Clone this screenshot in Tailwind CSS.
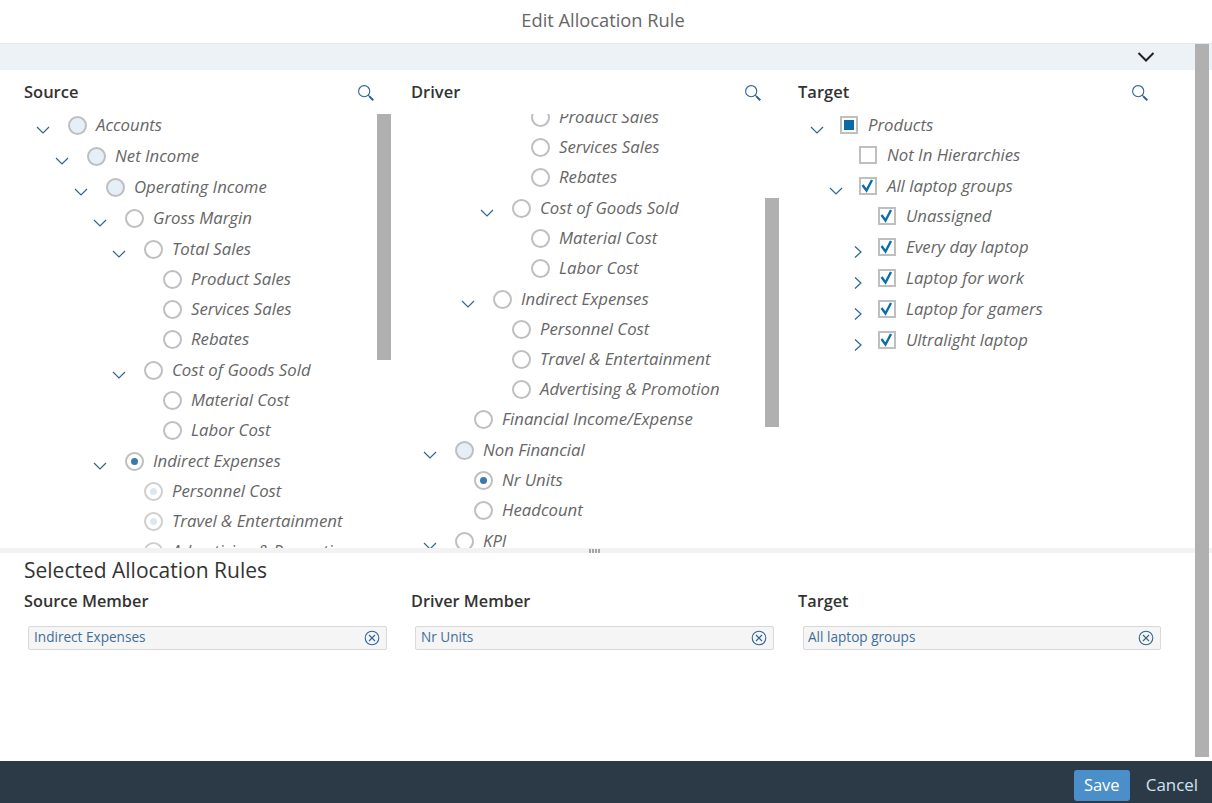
<!DOCTYPE html>
<html lang="en">
<head>
    <meta charset="UTF-8">
    <title>Edit Allocation Rule</title>
    <script src="https://cdn.jsdelivr.net/npm/@tailwindcss/browser@4"></script>
</head>
<body class="bg-white overflow-hidden font-['Open_Sans',sans-serif] text-[#333]">
    <div class="relative h-[803px] w-[1212px] flex flex-col">
        <!-- Title -->
        <header class="h-[44px] shrink-0 border-b border-[#e5e9ec] flex items-center justify-center pr-[6px] pb-[3px] text-[18.3px] text-[#666]">Edit Allocation Rule</header>

        <!-- Collapse band -->
        <div class="h-[26px] shrink-0 bg-[#edf2f7] flex justify-end pr-[56px] pt-[6px]">
            <svg class="w-[20px] h-[14px]" viewBox="0 0 20 14" fill="none" stroke="#222" stroke-width="2"><path d="M2.5 3 10 10.5 17.5 3"/></svg>
        </div>

        <!-- Trees -->
        <div class="h-[478px] shrink-0 grid grid-cols-[387px_387px_387px] pl-[24px]">
            <section class="min-w-0">
                <div class="h-[44px] flex items-center justify-between pr-[36px]">
                    <h2 class="text-[16.5px] font-semibold">Source</h2>
                    <svg class="w-[18px] h-[18px] mt-[2px]" viewBox="0 0 20 20" fill="none" stroke="#2f6497"><circle cx="8" cy="8" r="6.2" stroke-width="1.2"/><path d="M12.5 12.5 18 18" stroke-width="1.2"/><path d="M14 14 18 18" stroke-width="2.2"/></svg>
                </div>
                <div class="relative h-[434px] overflow-hidden">
                    <div id="sourceTree" class="-mt-[4px]"></div>
                    <div class="absolute left-[353px] top-0 w-[14px] h-[246px] bg-[#b0b0b0]"></div>
                </div>
            </section>
            <section class="min-w-0">
                <div class="h-[44px] flex items-center justify-between pr-[36px]">
                    <h2 class="text-[16.5px] font-semibold">Driver</h2>
                    <svg class="w-[18px] h-[18px] mt-[2px]" viewBox="0 0 20 20" fill="none" stroke="#2f6497"><circle cx="8" cy="8" r="6.2" stroke-width="1.2"/><path d="M12.5 12.5 18 18" stroke-width="1.2"/><path d="M14 14 18 18" stroke-width="2.2"/></svg>
                </div>
                <div class="relative h-[434px] overflow-hidden">
                    <div id="driverTree" class="-mt-[12px]"></div>
                    <div class="absolute left-[354px] top-[84px] w-[14px] h-[229px] bg-[#b0b0b0]"></div>
                </div>
            </section>
            <section class="min-w-0">
                <div class="h-[44px] flex items-center justify-between pr-[36px]">
                    <h2 class="text-[16.5px] font-semibold">Target</h2>
                    <svg class="w-[18px] h-[18px] mt-[2px]" viewBox="0 0 20 20" fill="none" stroke="#2f6497"><circle cx="8" cy="8" r="6.2" stroke-width="1.2"/><path d="M12.5 12.5 18 18" stroke-width="1.2"/><path d="M14 14 18 18" stroke-width="2.2"/></svg>
                </div>
                <div id="targetTree" class="-mt-[4px]"></div>
            </section>
        </div>

        <!-- Splitter -->
        <div class="h-[5px] shrink-0 bg-[#f2f2f2] flex justify-center">
            <div class="ml-[-24px] mt-[1px] w-[11px] h-[4px] bg-[repeating-linear-gradient(90deg,#a6a6a6_0,#a6a6a6_2px,#f2f2f2_2px,#f2f2f2_3px)]"></div>
        </div>

        <!-- Selected rules -->
        <div class="flex-1 pl-[24px]">
            <h3 class="text-[21px] leading-[27px] mt-[4px]">Selected Allocation Rules</h3>
            <div class="grid grid-cols-[387px_387px_387px] mt-[6px]">
                <div>
                    <div class="text-[16.3px] font-semibold leading-[22px]">Source Member</div>
                    <div class="mt-[14px] ml-[4px] w-[359px] h-[24px] flex items-center justify-between pl-[5px] pr-[6px] pb-[1px] bg-[#f5f5f5] border border-[#d9d9d9] rounded-[2px] text-[13.6px] text-[#3f6f98]">
                        <span>Indirect Expenses</span>
                        <svg class="w-[16px] h-[16px]" viewBox="0 0 16 16" fill="none" stroke="#2f6497" stroke-width="1.1"><circle cx="8" cy="8" r="6.8"/><path d="M5 5 11 11M11 5 5 11"/></svg>
                    </div>
                </div>
                <div>
                    <div class="text-[16.3px] font-semibold leading-[22px]">Driver Member</div>
                    <div class="mt-[14px] ml-[4px] w-[359px] h-[24px] flex items-center justify-between pl-[5px] pr-[6px] pb-[1px] bg-[#f5f5f5] border border-[#d9d9d9] rounded-[2px] text-[13.6px] text-[#3f6f98]">
                        <span>Nr Units</span>
                        <svg class="w-[16px] h-[16px]" viewBox="0 0 16 16" fill="none" stroke="#2f6497" stroke-width="1.1"><circle cx="8" cy="8" r="6.8"/><path d="M5 5 11 11M11 5 5 11"/></svg>
                    </div>
                </div>
                <div>
                    <div class="text-[16.3px] font-semibold leading-[22px]">Target</div>
                    <div class="mt-[14px] ml-[5px] w-[358px] h-[24px] flex items-center justify-between pl-[4px] pr-[6px] pb-[1px] bg-[#f5f5f5] border border-[#d9d9d9] rounded-[2px] text-[13.6px] text-[#3f6f98]">
                        <span>All laptop groups</span>
                        <svg class="w-[16px] h-[16px]" viewBox="0 0 16 16" fill="none" stroke="#2f6497" stroke-width="1.1"><circle cx="8" cy="8" r="6.8"/><path d="M5 5 11 11M11 5 5 11"/></svg>
                    </div>
                </div>
            </div>
        </div>

        <!-- Footer -->
        <footer class="h-[42px] shrink-0 bg-[#2c3a47] flex items-center justify-end pr-[14px] pt-[6px]">
            <button class="w-[56px] h-[31px] rounded-[3px] bg-[#4a8fca] text-white text-[16.5px]">Save</button>
            <button class="ml-[16px] text-[16.9px] text-[#d1e3f2]">Cancel</button>
        </footer>

        <!-- Dialog scrollbar -->
        <div class="absolute left-[1195px] top-[44px] w-[14px] h-[713px] bg-[#b0b0b0]"></div>
    </div>

    <script>
        // [label, level, chevron ("down" / "right" / ""), state, gap to next row]
        const sourceRows = [
            ['Accounts', 0, 'down', 'part', 31], ['Net Income', 1, 'down', 'part', 31],
            ['Operating Income', 2, 'down', 'part', 31], ['Gross Margin', 3, 'down', '', 31],
            ['Total Sales', 4, 'down', '', 30], ['Product Sales', 5, '', '', 30],
            ['Services Sales', 5, '', '', 30], ['Rebates', 5, '', '', 31],
            ['Cost of Goods Sold', 4, 'down', '', 30], ['Material Cost', 5, '', '', 30],
            ['Labor Cost', 5, '', '', 31], ['Indirect Expenses', 3, 'down', 'on', 30],
            ['Personnel Cost', 4, '', 'dim', 30], ['Travel & Entertainment', 4, '', 'dim', 30],
            ['Advertising & Promotion', 4, '', 'dim', 30]
        ];
        const driverRows = [
            ['Product Sales', 4, '', '', 30], ['Services Sales', 4, '', '', 30],
            ['Rebates', 4, '', '', 31], ['Cost of Goods Sold', 3, 'down', '', 30],
            ['Material Cost', 4, '', '', 30], ['Labor Cost', 4, '', '', 31],
            ['Indirect Expenses', 2, 'down', '', 30], ['Personnel Cost', 3, '', '', 30],
            ['Travel & Entertainment', 3, '', '', 30], ['Advertising & Promotion', 3, '', '', 30],
            ['Financial Income/Expense', 1, '', '', 31], ['Non Financial', 0, 'down', 'part', 30],
            ['Nr Units', 1, '', 'on', 30], ['Headcount', 1, '', '', 31], ['KPI', 0, 'down', '', 30]
        ];
        const targetRows = [
            ['Products', 0, 'down', 'mixed', 30], ['Not In Hierarchies', 1, '', '', 31],
            ['All laptop groups', 1, 'down', 'on', 30], ['Unassigned', 2, '', 'on', 31],
            ['Every day laptop', 2, 'right', 'on', 31], ['Laptop for work', 2, 'right', 'on', 31],
            ['Laptop for gamers', 2, 'right', 'on', 31], ['Ultralight laptop', 2, 'right', 'on', 31]
        ];

        const chevrons = {
            down: '<svg class="w-[18px] h-[18px] mt-[9px] shrink-0" viewBox="0 0 18 18" fill="none" stroke="#2f6497" stroke-width="1.2"><path d="M3 6 9 12 15 6"/></svg>',
            right: '<svg class="w-[18px] h-[18px] mt-[9px] shrink-0" viewBox="0 0 18 18" fill="none" stroke="#2f6497" stroke-width="1.2"><path d="M9 3.5 15 9 9 14.5"/></svg>',
            '': '<span class="w-[18px] h-[18px] shrink-0"></span>'
        };

        const radios = {
            '': '<span class="w-[19px] h-[19px] rounded-full border-2 border-[#bfbfbf] bg-white"></span>',
            part: '<span class="w-[19px] h-[19px] rounded-full border-2 border-[#bfbfbf] bg-[#e6eef7]"></span>',
            on: '<span class="w-[19px] h-[19px] rounded-full border-2 border-[#bfbfbf] bg-white flex items-center justify-center"><span class="w-[7px] h-[7px] rounded-full bg-[#3a78b0]"></span></span>',
            dim: '<span class="w-[19px] h-[19px] rounded-full border-2 border-[#cfcfcf] bg-white flex items-center justify-center"><span class="w-[7px] h-[7px] rounded-full bg-[#dce7f1]"></span></span>'
        };

        const checks = {
            '': '<span class="w-[18px] h-[18px] border-2 border-[#bfbfbf] bg-white"></span>',
            mixed: '<span class="w-[18px] h-[18px] border-2 border-[#bfbfbf] bg-white flex items-center justify-center"><span class="w-[10px] h-[10px] bg-[#0a6aa8]"></span></span>',
            on: '<span class="w-[18px] h-[18px] border-2 border-[#bfbfbf] bg-white"><svg class="w-[14px] h-[14px]" viewBox="0 0 14 14" fill="none" stroke="#0a6ea8" stroke-width="2.4"><path d="M1.5 6 5.5 11.5 11 1"/></svg></span>'
        };

        function row([label, level, chevron, state, gap], marks, markGap, textGap) {
            return `<div class="flex items-center h-[30px]" style="margin-bottom:${gap - 30}px;padding-left:${10 + level * 19}px">
                ${chevrons[chevron]}
                <span class="${markGap} flex shrink-0">${marks[state]}</span>
                <span class="${textGap} text-[16.75px] italic text-[#666] whitespace-nowrap">${label.replace('&', '&amp;')}</span>
            </div>`;
        }

        document.getElementById('sourceTree').innerHTML = sourceRows.map(r => row(r, radios, 'ml-[16px]', 'ml-[9px]')).join('');
        document.getElementById('driverTree').innerHTML = driverRows.map(r => row(r, radios, 'ml-[16px]', 'ml-[9px]')).join('');
        document.getElementById('targetTree').innerHTML = targetRows.map(r => row(r, checks, 'ml-[14px]', 'ml-[10px]')).join('');
    </script>
</body>
</html>
